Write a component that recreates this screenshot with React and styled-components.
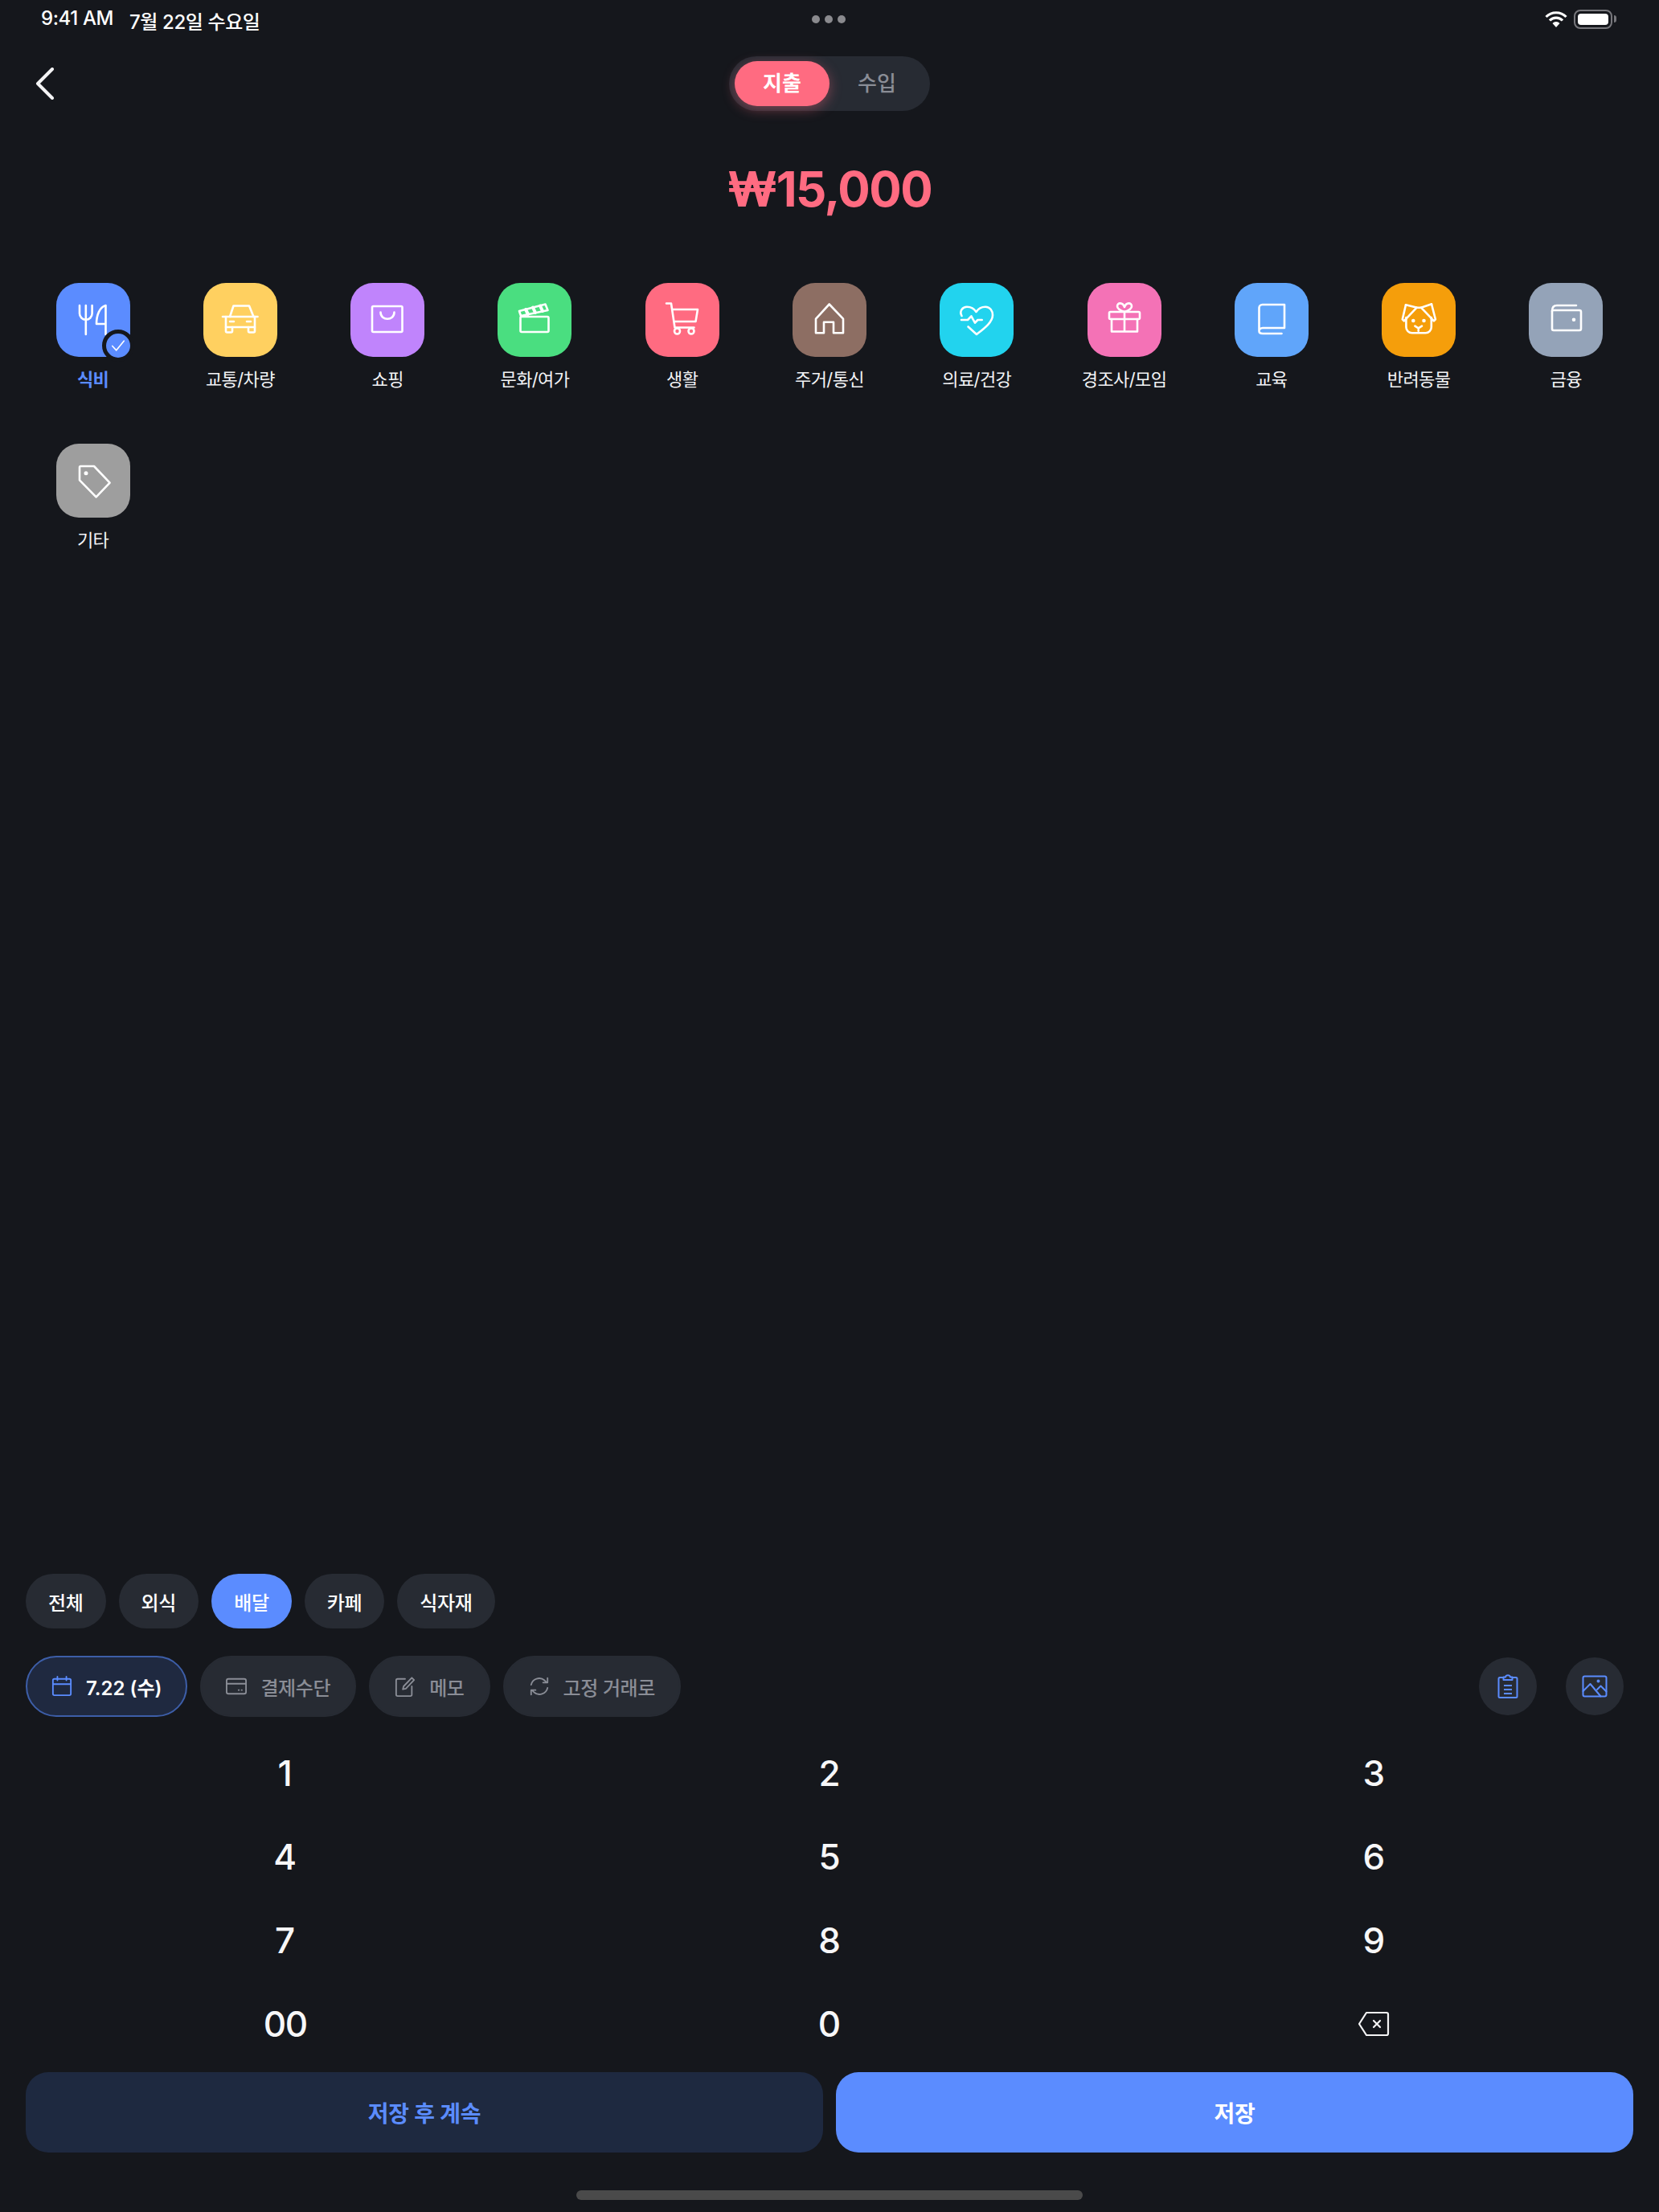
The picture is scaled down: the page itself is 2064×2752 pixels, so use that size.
import React from 'react'
import styled, { createGlobalStyle } from 'styled-components'

const BG = '#15171c'
const BLUE = '#5b8cff'
const CORAL = '#ff6b81'
const MUTED = '#8a8d96'
const CHIP = '#272b33'

const GlobalStyle = createGlobalStyle`
  html, body {
    margin: 0;
    padding: 0;
    background: ${BG};
  }
  * {
    box-sizing: border-box;
  }
`

const Page = styled.div`
  width: 2064px;
  height: 2752px;
  display: flex;
  flex-direction: column;
  background: ${BG};
  color: #fff;
  font-family: Inter, "Noto Sans CJK KR", sans-serif;
  overflow: hidden;
`

const StatusBar = styled.div`
  height: 48px;
  padding: 0 53px 0 51px;
  display: grid;
  grid-template-columns: 1fr auto 1fr;
  align-items: center;
`

const StatusText = styled.div`
  display: flex;
  gap: 20px;
  padding-top: 2px;
  font-size: 24px;
  font-weight: 500;
  letter-spacing: -0.4px;
`

const Dots = styled.div`
  display: flex;
  gap: 6px;
`

const Dot = styled.span`
  width: 10px;
  height: 10px;
  border-radius: 50%;
  background: #8a8a8e;
`

const StatusIcons = styled.div`
  display: flex;
  justify-content: flex-end;
  align-items: center;
  gap: 8px;
`

const Battery = styled.div`
  width: 48px;
  height: 24px;
  padding: 3px;
  border: 2.5px solid #77777c;
  border-radius: 8px;
  margin-right: 5px;
  position: relative;

  &::before {
    content: '';
    display: block;
    height: 100%;
    background: #fff;
    border-radius: 4px;
  }

  &::after {
    content: '';
    position: absolute;
    right: -7px;
    top: 5px;
    width: 3px;
    height: 9px;
    background: #77777c;
    border-radius: 0 3px 3px 0;
  }
`

const Header = styled.div`
  margin-top: 22px;
  height: 68px;
  padding: 0 44px;
  display: grid;
  grid-template-columns: 1fr auto 1fr;
  align-items: center;
`

const BackButton = styled.div`
  display: flex;
  align-items: center;
`

const Toggle = styled.div`
  display: flex;
  padding: 6px 7px;
  background: ${CHIP};
  border-radius: 34px;
`

const Segment = styled.div`
  width: 118px;
  height: 56px;
  border-radius: 28px;
  display: flex;
  align-items: center;
  justify-content: center;
  font-size: 26px;
  font-weight: ${p => (p.$active ? 600 : 500)};
  padding-bottom: 5px;
  color: ${p => (p.$active ? '#fff' : MUTED)};
  background: ${p => (p.$active ? CORAL : 'transparent')};
  box-shadow: ${p => (p.$active ? '0 4px 16px rgba(255, 107, 129, 0.4)' : 'none')};
`

const Amount = styled.div`
  margin-top: 59px;
  height: 76px;
  line-height: 76px;
  text-align: center;
  font-size: 60px;
  font-weight: 700;
  letter-spacing: -1.5px;
  color: ${CORAL};
`

const CategoryGrid = styled.div`
  margin-top: 79px;
  padding: 0 24px;
  display: grid;
  grid-template-columns: repeat(11, 1fr);
  grid-auto-rows: 200px;
`

const Category = styled.div`
  display: flex;
  flex-direction: column;
  align-items: center;
`

const Tile = styled.div`
  position: relative;
  width: 92px;
  height: 92px;
  border-radius: 28px;
  background: ${p => p.$bg};
`

const TileSvg = styled.svg.attrs({ viewBox: '0 0 92 92', fill: 'none' })`
  display: block;
  width: 92px;
  height: 92px;
  stroke: #fff;
  stroke-width: 2.6;
  stroke-linecap: round;
  stroke-linejoin: round;
`

const CheckBadge = styled.div`
  position: absolute;
  right: -5px;
  bottom: -6px;
  width: 40px;
  height: 40px;
  border-radius: 50%;
  background: ${BLUE};
  border: 5px solid ${BG};
  display: flex;
  align-items: center;
  justify-content: center;
`

const CategoryLabel = styled.div`
  margin-top: 12px;
  line-height: 32px;
  font-size: 22px;
  letter-spacing: -0.6px;
  font-weight: ${p => (p.$active ? 600 : 400)};
  color: ${p => (p.$active ? BLUE : '#f2f3f5')};
  white-space: nowrap;
`

const Bottom = styled.div`
  margin-top: auto;
  display: flex;
  flex-direction: column;
`

const ChipRow = styled.div`
  padding: 0 32px;
  display: flex;
  gap: 16px;
`

const Chip = styled.div`
  height: 68px;
  padding: 0 28px;
  border-radius: 34px;
  display: flex;
  align-items: center;
  font-size: 24px;
  font-weight: 500;
  letter-spacing: -0.3px;
  background: ${p => (p.$active ? BLUE : CHIP)};
  color: #fff;
`

const ActionRow = styled.div`
  margin-top: 34px;
  padding: 0 44px 0 32px;
  display: flex;
  align-items: center;
  gap: 16px;
`

const Pill = styled.div`
  height: 76px;
  padding: 0 30px;
  border-radius: 38px;
  display: flex;
  align-items: center;
  gap: 17px;
  font-size: 24px;
  letter-spacing: ${p => (p.$active ? '0' : '-0.4px')};
  font-weight: ${p => (p.$active ? 600 : 500)};
  color: ${p => (p.$active ? '#fff' : MUTED)};
  background: ${p => (p.$active ? '#1f2940' : CHIP)};
  border: 2px solid ${p => (p.$active ? '#3d5ea8' : CHIP)};
  white-space: nowrap;
`

const Spacer = styled.div`
  flex: 1;
`

const RoundButton = styled.div`
  width: 72px;
  height: 72px;
  margin-left: 20px;
  border-radius: 50%;
  background: ${CHIP};
  display: flex;
  align-items: center;
  justify-content: center;
`

const PillSvg = styled.svg.attrs({ fill: 'none', viewBox: '0 0 28 28' })`
  flex: none;
  width: 26px;
  height: 26px;
  stroke: ${p => p.$color || MUTED};
  stroke-width: 2;
  stroke-linecap: round;
  stroke-linejoin: round;
`

const RoundSvg = styled.svg.attrs({ fill: 'none', viewBox: '0 0 32 32' })`
  width: 32px;
  height: 32px;
  stroke: ${BLUE};
  stroke-width: 2;
  stroke-linecap: round;
  stroke-linejoin: round;
`

const Keypad = styled.div`
  margin-top: 18px;
  padding: 0 16px;
  display: grid;
  grid-template-columns: repeat(3, 1fr);
  grid-auto-rows: 104px;
`

const Key = styled.div`
  display: flex;
  align-items: center;
  justify-content: center;
  font-size: 44px;
  font-weight: 500;
  letter-spacing: ${p => (p.$tight ? '-1.5px' : '0')};
  color: #f7f7f8;
`

const ButtonRow = styled.div`
  margin-top: 8px;
  padding: 0 32px;
  display: flex;
  gap: 16px;
`

const SaveButton = styled.div`
  flex: 1;
  height: 100px;
  border-radius: 28px;
  display: flex;
  align-items: center;
  justify-content: center;
  font-size: 28px;
  font-weight: 700;
  letter-spacing: -0.2px;
  background: ${p => (p.$primary ? BLUE : '#1e2940')};
  color: ${p => (p.$primary ? '#fff' : BLUE)};
`

const HomeBar = styled.div`
  width: 630px;
  height: 12px;
  margin: 47px auto 15px;
  border-radius: 6px;
  background: #4a4a4a;
`

const categories = [
  {
    label: '식비',
    bg: BLUE,
    active: true,
    icon: (
      <>
        <path d="M29 28v10a7.800 7.800 0 0 0 15.600 0V28" />
        <path d="M36.800 28v36" />
        <path d="M61.500 64V28C54 30 50 40 50 51h11.500" />
      </>
    ),
  },
  {
    label: '교통/차량',
    bg: '#ffd060',
    icon: (
      <>
        <path d="M33 42l4.500-13.500H57L62.500 42" />
        <path d="M24 42h43.500" />
        <path d="M28 42v18a1.500 1.500 0 0 0 1.500 1.500h5A1.500 1.500 0 0 0 36 60v-5h20v5a1.500 1.500 0 0 0 1.500 1.500h5A1.500 1.500 0 0 0 64 60V42" />
        <path d="M28 55h8M56 55h8M33 48h5M54 48h5" />
      </>
    ),
  },
  {
    label: '쇼핑',
    bg: '#c084fc',
    icon: (
      <>
        <rect x="27" y="29" width="37.500" height="32" rx="1.500" />
        <path d="M37.500 36.500c0 11 17 11 17 0" />
      </>
    ),
  },
  {
    label: '문화/여가',
    bg: '#4ade80',
    icon: (
      <>
        <rect x="28.500" y="42" width="35" height="19" rx="1.500" />
        <path d="M27 35l32.500-8.500 3 7.500-33.500 7z" />
        <path d="M35 33l3 6M44 30.500l3 6.500M53 28.500l3 6.500" strokeWidth="4" />
      </>
    ),
  },
  {
    label: '생활',
    bg: CORAL,
    icon: (
      <>
        <path d="M26 25.500h6l4.500 30h24" />
        <path d="M33.500 33h31.500l-2.500 15H36" />
        <circle cx="39.500" cy="60" r="3.500" />
        <circle cx="57" cy="60" r="3.500" />
      </>
    ),
  },
  {
    label: '주거/통신',
    bg: '#8d6e63',
    icon: <path d="M45.700 26.500L29 44.700v17.600h10V48.700h12v13.600h12V44.700z" />,
  },
  {
    label: '의료/건강',
    bg: '#22d3ee',
    icon: (
      <>
        <path d="M27.500 41C24 34.500 29 29.700 34 29.700c5 0 9 2.300 11.500 6.300 2.500-4 6.500-6.300 11.500-6.300 6 0 9 5.300 9 10.300 0 9-11 17-20 24l-10.500-9.500" />
        <path d="M27 46h8l4.400-4.700 4.600 8.400 3.400-3.700h5.300" />
      </>
    ),
  },
  {
    label: '경조사/모임',
    bg: '#f472b6',
    icon: (
      <>
        <rect x="27" y="36" width="38" height="9" rx="1.500" />
        <path d="M30 45v15.500h32V45M46 36v24.500" />
        <path d="M46 36c-3-1-9-3-9-7 0-5 7-5 9 1 2-6 9-6 9-1 0 4-6 6-9 7z" />
      </>
    ),
  },
  {
    label: '교육',
    bg: '#60a5fa',
    icon: (
      <>
        <path d="M30.500 60V31a4 4 0 0 1 4-4H62v29H35c-2.800 0-4.500 1.800-4.500 4s1.700 3 4.500 3h23.500" />
      </>
    ),
  },
  {
    label: '반려동물',
    bg: '#f59e0b',
    icon: (
      <>
        <path d="M30 27.300l14 3.400h5l13-4.400" />
        <path d="M30 27.300l-4.200 18 2 2 15.800-16.600M62 26.300l4.900 19-2 2L49 30.700" />
        <path d="M30.400 43v12a7.300 7.300 0 0 0 7.300 7.300h16.800a7.300 7.300 0 0 0 7.300-7.300V43" />
        <path d="M41.400 53.700l4.300 2.600 4.300-2.600M45.700 56.300v3.400" />
        <circle cx="39.300" cy="47" r="1" fill="#fff" />
        <circle cx="52.500" cy="47" r="1" fill="#fff" />
      </>
    ),
  },
  {
    label: '금융',
    bg: '#94a3b8',
    icon: (
      <>
        <path d="M29 35c0-4 2-7 6-7h24" />
        <path d="M29 35v22a2 2 0 0 0 2 2h32a2 2 0 0 0 2-2V36a2 2 0 0 0-2-2H30" />
        <circle cx="56" cy="45.700" r="1" fill="#fff" />
      </>
    ),
  },
  {
    label: '기타',
    bg: '#9e9e9e',
    icon: (
      <>
        <path d="M29 29.500a1.500 1.500 0 0 1 1.500-1.500H47l19.600 20.700L49.600 66.300 29 45.300z" />
        <circle cx="37" cy="36.700" r="1.200" fill="#fff" />
      </>
    ),
  },
]

const subCategories = ['전체', '외식', '배달', '카페', '식자재']
const digits = ['1', '2', '3', '4', '5', '6', '7', '8', '9', '00', '0']

const WifiIcon = () => (
  <svg width="28" height="22" viewBox="0 0 28 22" fill="none" stroke="#fff" strokeWidth="3.200">
    <path d="M1.500 8a17.500 17.500 0 0 1 25 0" />
    <path d="M6 12.500a11 11 0 0 1 16 0" />
    <path d="M14 21l4.500-5a6 6 0 0 0-9 0z" fill="#fff" stroke="none" />
  </svg>
)

const BackIcon = () => (
  <svg width="24" height="40" viewBox="0 0 24 40" fill="none" stroke="#f4f4f5" strokeWidth="4" strokeLinecap="round" strokeLinejoin="round">
    <path d="M21 2L3 20l18 18" />
  </svg>
)

const BackspaceIcon = () => (
  <svg width="40" height="32" viewBox="0 0 40 32" fill="none" stroke="#f4f4f5" strokeWidth="2.200" strokeLinejoin="round" strokeLinecap="round">
    <path d="M11 2h25a2 2 0 0 1 2 2v24a2 2 0 0 1-2 2H11L2 16z" />
    <path d="M20 12l8 8M28 12l-8 8" />
  </svg>
)

const App = () => (
  <Page>
    <GlobalStyle />
    <StatusBar>
      <StatusText>
        <span>9:41 AM</span>
        <span>7월 22일 수요일</span>
      </StatusText>
      <Dots>
        <Dot />
        <Dot />
        <Dot />
      </Dots>
      <StatusIcons>
        <WifiIcon />
        <Battery />
      </StatusIcons>
    </StatusBar>

    <Header>
      <BackButton>
        <BackIcon />
      </BackButton>
      <Toggle>
        <Segment $active>지출</Segment>
        <Segment>수입</Segment>
      </Toggle>
    </Header>

    <Amount>₩15,000</Amount>

    <CategoryGrid>
      {categories.map(c => (
        <Category key={c.label}>
          <Tile $bg={c.bg}>
            <TileSvg>{c.icon}</TileSvg>
            {c.active && (
              <CheckBadge>
                <svg width="18" height="18" viewBox="0 0 20 20" fill="none" stroke="#fff" strokeWidth="1.800" strokeLinecap="round" strokeLinejoin="round">
                  <path d="M2 10.500l5.500 6L18 3.500" />
                </svg>
              </CheckBadge>
            )}
          </Tile>
          <CategoryLabel $active={c.active}>{c.label}</CategoryLabel>
        </Category>
      ))}
    </CategoryGrid>

    <Bottom>
      <ChipRow>
        {subCategories.map(s => (
          <Chip key={s} $active={s === '배달'}>{s}</Chip>
        ))}
      </ChipRow>

      <ActionRow>
        <Pill $active>
          <PillSvg $color={BLUE}>
            <rect x="2" y="4" width="24" height="22" rx="2" />
            <path d="M2 11h24M8 1v5M20 1v5" />
          </PillSvg>
          7.22 (수)
        </Pill>
        <Pill>
          <PillSvg>
            <rect x="1" y="4" width="26" height="20" rx="2.500" />
            <path d="M1 10.500h26M17 19h.5M21 19h.5" />
          </PillSvg>
          결제수단
        </Pill>
        <Pill>
          <PillSvg>
            <path d="M14 4H4a2 2 0 0 0-2 2v19a2 2 0 0 0 2 2h17a2 2 0 0 0 2-2V14" />
            <path d="M23 2.500l3 3L15 17l-4 1 1-4z" />
          </PillSvg>
          메모
        </Pill>
        <Pill>
          <PillSvg>
            <path d="M3 12a11 11 0 0 1 18-6l3 3M25 3v6h-6" />
            <path d="M25 16a11 11 0 0 1-18 6l-3-3M3 25v-6h6" />
          </PillSvg>
          고정 거래로
        </Pill>
        <Spacer />
        <RoundButton>
          <RoundSvg>
            <path d="M10.500 5H6a1.500 1.500 0 0 0-1.500 1.500v22A1.500 1.500 0 0 0 6 30h20a1.500 1.500 0 0 0 1.500-1.500v-22A1.500 1.500 0 0 0 26 5h-4.500" />
            <path d="M10.500 8V4.500h2.500c.5-3 5.500-3 6 0h2.500V8z" />
            <path d="M11 15h10M11 20h10M11 25h10" strokeLinecap="butt" />
          </RoundSvg>
        </RoundButton>
        <RoundButton>
          <RoundSvg>
            <rect x="1.500" y="3.500" width="29" height="25" rx="2" />
            <path d="M1.500 22l9-9 13 15.500" />
            <path d="M19 20l4.500-4.500 7 7" />
            <circle cx="20.500" cy="9.500" r="1" fill={BLUE} />
          </RoundSvg>
        </RoundButton>
      </ActionRow>

      <Keypad>
        {digits.map(d => (
          <Key key={d} $tight={d === '00'}>{d}</Key>
        ))}
        <Key>
          <BackspaceIcon />
        </Key>
      </Keypad>

      <ButtonRow>
        <SaveButton>저장 후 계속</SaveButton>
        <SaveButton $primary>저장</SaveButton>
      </ButtonRow>

      <HomeBar />
    </Bottom>
  </Page>
)

export default App
